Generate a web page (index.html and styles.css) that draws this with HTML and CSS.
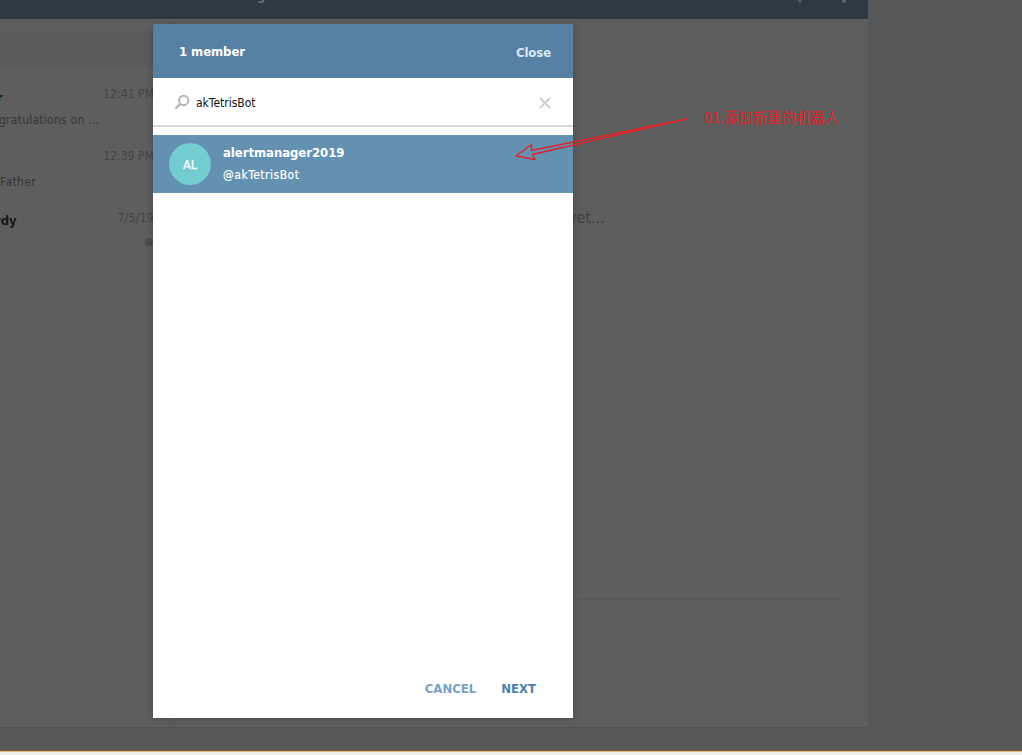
FILE: index.html
```html
<!DOCTYPE html>
<html lang="en">
<head>
<meta charset="utf-8">
<title>Telegram</title>
<link rel="stylesheet" href="styles.css">
</head>
<body>
<div class="page">
  <div class="app">
    <header class="topbar">
      <span class="topbar-title">g</span>
      <svg class="topbar-icons" width="60" height="19" viewBox="0 0 60 19"><path d="M-3 -3L2 2" transform="translate(1 0)" stroke="#56656e" stroke-width="2"/><circle cx="46" cy="1" r="2" fill="#56656e"/></svg>
    </header>
    <div class="columns">
      <aside class="dialogs">
        <div class="search-strip"></div>
        <div class="dialog">
          <div class="line"><b class="name first">r</b><span class="time">12:41 PM</span></div>
          <div class="preview congrats">gratulations on ...</div>
        </div>
        <div class="dialog">
          <div class="line"><span></span><span class="time">12:39 PM</span></div>
          <div class="preview">Father</div>
        </div>
        <div class="dialog last">
          <div class="line"><b class="name">rdy</b><span class="time date">7/5/19</span></div>
          <div class="unread"></div>
        </div>
      </aside>
      <main class="chat">
        <div class="history"><span>yet...</span></div>
        <div class="composer"></div>
      </main>
    </div>
  </div>
  <footer class="bottom"></footer>
</div>

<section class="modal">
  <header class="modal-head"><span class="members">1 member</span><span class="close">Close</span></header>
  <div class="modal-search">
    <svg width="16" height="16" viewBox="0 0 16 16"><circle cx="9.7" cy="6.5" r="4.7" fill="none" stroke="#b5b5b5" stroke-width="1.9"/><path d="M6.2 10L1.5 14.5" stroke="#b5b5b5" stroke-width="2.3"/></svg>
    <span class="query">akTetrisBot</span>
    <svg class="clear" width="12" height="12" viewBox="0 0 12 12"><path d="M1 1L11 11M11 1L1 11" stroke="#cdcdcd" stroke-width="1.8"/></svg>
  </div>
  <div class="contact">
    <div class="avatar">AL</div>
    <div class="contact-text"><b class="contact-name">alertmanager2019</b><span class="handle">@akTetrisBot</span></div>
  </div>
  <footer class="actions"><span class="cancel">CANCEL</span><span class="next">NEXT</span></footer>
</section>

<svg class="arrow" width="190" height="60" viewBox="510 110 190 60"><path d="M687.5 118.7L531.5 150.5V144.5L516 156L535 159.5L532.5 154.5Z" fill="none" stroke="#d9262b" stroke-width="1.5" stroke-linejoin="round"/></svg>
<div class="note">01.添加新建的机器人</div>
</body>
</html>
```
FILE: styles.css
```css
* { box-sizing: border-box; }
body { margin: 0; font-family: "DejaVu Sans Condensed", "DejaVu Sans", sans-serif; font-size: 12px; }
.page { position: relative; width: 1022px; height: 755px; overflow: hidden; background: #565759; display: flex; flex-direction: column; }
.app { width: 868px; height: 727px; display: flex; flex-direction: column; background: #5e5e5e; border-radius: 0 0 3px 0; box-shadow: 0 1px 0 #505153; }
.topbar { height: 19px; flex: none; background: #2d3943; display: flex; justify-content: space-between; padding: 0 8px 0 257px; overflow: hidden; }
.topbar-title { font-size: 13px; line-height: 16px; margin-top: -12px; height: 16px; font-weight: bold; color: #66757e; }
.topbar-icons { margin-right: 2px; overflow: hidden; }
.columns { flex: 1; display: flex; }
.dialogs { width: 171px; flex: none; border-right: 1px solid #575757; padding-top: 12px; }
.search-strip { height: 35px; background: #5a5a5a; margin-bottom: 19px; }
.dialog { height: 62px; width: 154px; }
.line { display: flex; justify-content: space-between; align-items: flex-start; height: 17px; line-height: 19px; }
.time { color: #434343; letter-spacing: .05px; }
.date { letter-spacing: .3px; }
.name { color: #171717; font-size: 13px; letter-spacing: -.1px; line-height: 24px; }
.first { margin-left: -3px; line-height: 26px; }
.preview { color: #363636; font-size: 12px; line-height: 18px; margin-top: 9px; white-space: nowrap; letter-spacing: .35px; }
.congrats { letter-spacing: .25px; margin-left: -1px; }
.last .name { margin-left: -5px; }
.unread { width: 8px; height: 8px; border-radius: 50%; background: #494d50; margin: 12px 0 0 145px; }
.chat { flex: 1; display: flex; flex-direction: column; }
.history { height: 581px; border-bottom: 1px solid #585858; margin-right: 25px; padding: 187px 0 0 397px; }
.history span { font-size: 16px; line-height: 24px; color: #3f3f3f; }
.composer { flex: 1; }
.bottom { margin-top: auto; height: 5px; background: #f0eeeb; border-top: 1px solid #87602f; box-shadow: inset 0 1px 0 #d9b88c; }
.modal { position: absolute; left: 153px; top: 24px; width: 420px; height: 694px; background: #fff; box-shadow: 0 1px 8px rgba(0, 0, 0, .22); display: flex; flex-direction: column; }
.modal-head { height: 54px; background: #5680a4; color: #fff; font-weight: bold; font-size: 13px; display: flex; justify-content: space-between; align-items: center; padding: 0 22px 0 26px; }
.members { letter-spacing: -.08px; }
.close { color: #dbe8f3; font-size: 13px; letter-spacing: -.1px; margin-top: 3px; }
.modal-search { height: 49px; display: flex; align-items: center; padding: 0 22px 0 21px; border-bottom: 2px solid #d8d8d8; }
.query { margin-left: 6px; color: #111; letter-spacing: 0; line-height: 18px; margin-top: 3px; }
.clear { margin-left: auto; margin-top: 3px; }
.contact { height: 58px; margin-top: 8px; background: #6490b1; display: flex; align-items: center; padding-left: 16px; color: #fff; }
.avatar { width: 42px; height: 42px; border-radius: 50%; background: #73cccf; display: flex; align-items: center; justify-content: center; padding-top: 1px; font-size: 12.5px; -webkit-text-stroke: .25px; }
.contact-text { margin-left: 12px; display: flex; flex-direction: column; line-height: 22px; margin-top: -1px; }
.contact-name { font-size: 13px; letter-spacing: -.05px; }
.handle { letter-spacing: .5px; -webkit-text-stroke: .2px; }
.actions { margin-top: auto; height: 60px; padding-right: 37px; display: flex; justify-content: flex-end; align-items: center; gap: 25px; font-size: 13px; font-weight: bold; }
.cancel { color: #79a2c4; }
.next { color: #4c7fac; }
.arrow { position: absolute; left: 510px; top: 110px; }
.note { position: absolute; left: 704px; top: 107px; font-family: "Noto Sans CJK SC", sans-serif; font-size: 14.3px; line-height: 20px; color: #e0242a; white-space: nowrap; letter-spacing: .1px; }
```
